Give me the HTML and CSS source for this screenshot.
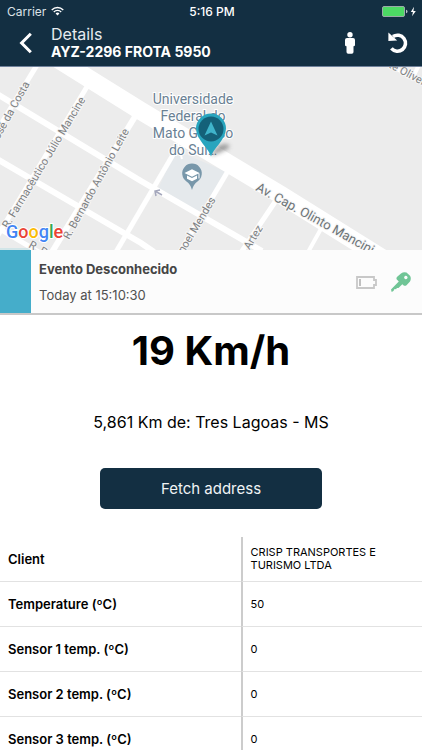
FILE: index.html
```html
<!DOCTYPE html>
<html lang="en">
<head>
<meta charset="utf-8">
<meta name="viewport" content="width=device-width, initial-scale=1">
<title>Details</title>
<link rel="stylesheet" href="styles.css">
</head>
<body>
<div class="app">
  <header class="header">
    <div class="status">
      <div class="status-left">
        <span>Carrier</span>
        <svg class="wifi" viewBox="0 0 14 10" aria-hidden="true">
          <path d="M.8 3.800a8.800 8.800 0 0 1 12.400 0M3 6a5.700 5.700 0 0 1 8 0" fill="none" stroke="#fff" stroke-width="1.500"/>
          <path d="M4.900 7.700a3 3 0 0 1 4.200 0L7 9.900z" fill="#fff"/>
        </svg>
      </div>
      <span class="clock">5:16 PM</span>
      <div class="status-right">
        <svg class="battery" viewBox="0 0 35 11" aria-hidden="true">
          <rect x=".5" y=".5" width="22" height="10" rx="1.500" fill="#4cd964" stroke="#9aa9a8"/>
          <path d="M24 3.700q1.500.3 1.500 1.800T24 7.300z" fill="#b8c2c6"/>
          <path d="M32 .8 28.800 6h2.100l-.8 4.200L33.800 4.900h-2.400z" fill="#fff"/>
        </svg>
      </div>
    </div>
    <nav class="nav">
      <button class="icon-button back" aria-label="Back">
        <svg viewBox="0 0 14 22" width="14" height="22"><path d="M11.800 1.800 2.600 11l9.200 9.200" fill="none" stroke="#fff" stroke-width="3"/></svg>
      </button>
      <div class="titles">
        <span class="title">Details</span>
        <h1 class="vehicle">AYZ-2296 FROTA 5950</h1>
      </div>
      <button class="icon-button" aria-label="Street view">
        <svg viewBox="0 0 12 22" width="12" height="22" fill="#fff"><circle cx="6" cy="2.800" r="2.700"/><path d="M3 6h6q2 0 2 2v5q0 1.200-1.500 1.200V20q0 1.700-1.700 1.700H4.200q-1.700 0-1.700-1.700v-5.800Q1 14.200 1 13V8q0-2 2-2z"/></svg>
      </button>
      <button class="icon-button reload" aria-label="Reload">
        <svg viewBox="0 0 22 22" width="22" height="22"><path d="M6 4.600A8 8 0 1 1 4.400 16.400" fill="none" stroke="#fff" stroke-width="3.600"/><path d="M1.400.6 10.200 8.400 1.400 9z" fill="#fff"/></svg>
      </button>
    </nav>
  </header>

  <main class="content">
    <svg class="map" viewBox="0 0 422 183" preserveAspectRatio="xMidYMid slice" role="img" aria-label="Vehicle location map">
      <defs>
        <filter id="soft" x="-50%" y="-50%" width="200%" height="200%"><feGaussianBlur stdDeviation="2"/></filter>
      </defs>
      <rect width="422" height="183" fill="#ececec"/>
      <path d="M173 88 187 88 227 105 196 149 157 125z" fill="#e5e9ec"/>
      <g fill="none" stroke="#fff" stroke-width="6">
        <path d="M-3 27 141 114 262 184"/>
        <path d="M-3 92 141 176 154 185"/>
        <path d="M37-2 -2 62" stroke-width="5"/>
        <path d="M88 18-3 170" stroke-width="5"/>
        <path d="M136 48 52 185"/>
        <path d="M174 86 116 185" stroke-width="5"/>
        <path d="M228 104 180 185" stroke-width="5"/>
        <path d="M277 132 240 187" stroke-width="5"/>
        <path d="M322 160 307 187" stroke-width="4"/>
        <path d="M386-4 426 18" stroke-width="4"/>
        <path d="M419-2 414 8" stroke-width="4"/>
        <path d="M-2 161 42 187" stroke-width="5"/>
        <path d="M56-9 141 44 281 128 382 191" stroke-width="18"/>
        <path d="M178 77q2 8 4 15" stroke-width="2"/>
      </g>
      <path d="M0 182h30" stroke="#b7dfe5"/>
      <path d="m162 128-7-4m1 5-1-5 5-1" fill="none" stroke="#a4a7bc" stroke-width="1.500"/>
      <g class="street">
        <text transform="translate(8 162) rotate(-59)">R. Farmacêutico Júlio Mancine</text>
        <text transform="translate(69 173) rotate(-61)">R. Bernardo Antônio Leite</text>
        <text transform="translate(30 17) rotate(-61)" text-anchor="end">José da Costa</text>
        <text transform="translate(216 133) rotate(-59)" text-anchor="end">Manoel Mendes</text>
        <text transform="translate(263 161) rotate(-59)" text-anchor="end">R. Artez</text>
        <text transform="translate(28 180) rotate(29)">R. P</text>
        <text transform="translate(388 0) rotate(28)">te Oliveira</text>
        <text class="avenue" transform="translate(255 123) rotate(29)">Av. Cap. Olinto Mancini</text>
      </g>
      <g class="place">
        <text x="193" y="37">Universidade</text>
        <text x="193" y="54">Federal do</text>
        <text x="193" y="71">Mato Grosso</text>
        <text x="193" y="88">do Sul…</text>
      </g>
      <path d="M192 123q-1.500-6-5.500-8.500a9.800 9.800 0 1 1 11 0Q193.500 117 192 123z" fill="#7897aa"/>
      <path d="m184.500 106 7.500-3.800 7.500 3.800-7.500 3.800zM187 108.500l5 2.600 5-2.600v3.200l-5 2.500-5-2.500zM198.500 106.500h1v5h-1z" fill="#fff"/>
      <path d="M211 89q4-11 14-12 8 1 2 5-7 4-16 7z" fill="#555" opacity=".55" filter="url(#soft)"/>
      <path d="M211 89.500c-2-8-15-17-15-28a15 15 0 0 1 30 0c0 11-13 20-15 28z" fill="#28a5be"/>
      <circle cx="211" cy="62" r="12.500" fill="#146179"/>
      <path d="m211 54.500 6.500 14-6.500-3-6.500 3z" fill="#3fb4cb"/>
      <text class="google" x="6" y="171"><tspan fill="#4285f4">G</tspan><tspan fill="#ea4335">o</tspan><tspan fill="#fbbc05">o</tspan><tspan fill="#4285f4">g</tspan><tspan fill="#34a853">l</tspan><tspan fill="#ea4335">e</tspan></text>
    </svg>

    <section class="event">
      <div class="event-text">
        <h2 class="event-name">Evento Desconhecido</h2>
        <time class="event-time">Today at 15:10:30</time>
      </div>
      <svg viewBox="0 0 21 13" width="21" height="13" aria-hidden="true"><path d="M1 1h17v3h2v5h-2v3H1z" fill="none" stroke="#c8c8c8" stroke-width="1.800"/><path d="M3 3h2v7H3z" fill="#c0c0c0"/></svg>
      <svg viewBox="0 0 20 20" width="20" height="20" aria-hidden="true"><path fill="#70c596" fill-rule="evenodd" d="M10 1.500Q12.700-.6 15.500.6L19 3.800Q20.600 6.500 19 9.500l-3.500 3.700q-1.300 1-2.800.3L11.300 12.300 7.500 16l-1.600.1-.8 1.100-1.500-.1-1.200 1.900L.7 20 0 17.500 7.800 9.400 5.600 7.200q-.5-1.500.6-2.400zM14.800 3.800a1.700 1.700 0 1 0 .1 0z"/></svg>
    </section>

    <section class="summary">
      <p class="speed">19 Km/h</p>
      <p class="distance">5,861 Km de: Tres Lagoas - MS</p>
      <button class="fetch">Fetch address</button>
    </section>

    <table class="details">
      <tbody>
        <tr><th scope="row">Client</th><td>CRISP TRANSPORTES E TURISMO LTDA</td></tr>
        <tr><th scope="row">Temperature (ºC)</th><td>50</td></tr>
        <tr><th scope="row">Sensor 1 temp. (ºC)</th><td>0</td></tr>
        <tr><th scope="row">Sensor 2 temp. (ºC)</th><td>0</td></tr>
        <tr><th scope="row">Sensor 3 temp. (ºC)</th><td>0</td></tr>
      </tbody>
    </table>
  </main>
</div>
</body>
</html>
```
FILE: styles.css
```css
* { box-sizing: border-box; }

body {
  margin: 0;
  background: #fff;
  color: #000;
  font-family: Inter, Roboto, sans-serif;
}

h1, h2, p { margin: 0; }

button {
  border: 0;
  font: inherit;
  cursor: pointer;
}

.app {
  display: flex;
  flex-direction: column;
  height: 100vh;
}

.header {
  flex: none;
  background: #132f42;
  color: #fff;
  border-bottom: 1px solid #6f819b;
}

.status {
  display: grid;
  grid-template-columns: 1fr auto 1fr;
  align-items: center;
  height: 22px;
  padding: 0 5px 0 7px;
  font-size: 12px;
}

.status-left {
  display: flex;
  align-items: center;
  gap: 5px;
  color: #dbe2e7;
}

.wifi { width: 13px; height: 10px; }

.clock { font-weight: 500; }

.status-right { display: flex; justify-content: flex-end; }

.battery { width: 35px; height: 11px; }

.nav {
  display: flex;
  align-items: center;
  height: 44px;
  padding: 0 8px 2px 6px;
}

.icon-button {
  display: flex;
  align-items: center;
  justify-content: center;
  width: 40px;
  height: 42px;
  padding: 0;
  background: none;
}

.reload { margin-left: 12px; width: 32px; }

.back { width: 40px; }

.titles {
  flex: 1;
  padding-left: 5px;
}

.title {
  display: block;
  font-size: 16px;
  line-height: 18px;
  color: #e6ebef;
}

.vehicle {
  font-size: 14px;
  line-height: 18px;
  font-weight: 700;
}

.content {
  flex: 1;
  min-height: 0;
  overflow-y: auto;
  scrollbar-width: none;
}

.map {
  display: block;
  width: 100%;
  height: 183px;
  font-family: Roboto, sans-serif;
}

.street text {
  font-size: 11px;
  fill: #7d8082;
  stroke: #f6f6f6;
  stroke-width: 2px;
  paint-order: stroke;
}

.street .avenue {
  font-size: 13px;
  fill: #6d7477;
}

.place text {
  font-size: 14px;
  text-anchor: middle;
  fill: #698093;
  stroke: #fff;
  stroke-width: 2px;
  paint-order: stroke;
}

.google {
  font-size: 18px;
  font-weight: 500;
  stroke: #fff;
  stroke-width: 2px;
  paint-order: stroke;
}

.event {
  display: flex;
  align-items: center;
  gap: 14px;
  padding: 8px 11px 7px 8px;
  border-left: 31px solid #45adca;
  background: #fcfcfc;
  box-shadow: 0 2px 0 #c8c8c8;
}

.event-text { flex: 1; }

.event-name {
  font-size: 13px;
  line-height: 22px;
  font-weight: 700;
  color: #454545;
}

.event-time {
  display: block;
  padding-top: 4px;
  font-size: 13px;
  line-height: 22px;
  color: #505050;
}

.summary {
  display: flex;
  flex-direction: column;
  align-items: center;
  padding: 13px 16px 28px;
}

.speed {
  font-size: 40px;
  line-height: 50px;
  font-weight: 700;
}

.distance {
  padding: 36px 0;
  font-size: 16px;
  line-height: 20px;
}

.fetch {
  width: 57%;
  height: 41px;
  border-radius: 5px;
  background: #132f42;
  color: #f0f3f5;
  font-size: 15px;
}

.details {
  width: 100%;
  border-collapse: separate;
  border-spacing: 0;
  table-layout: fixed;
}

.details th,
.details td {
  height: 45px;
  padding: 0 8px;
  border-bottom: 1px solid #e2e2e2;
  text-align: left;
}

.details th {
  width: 57%;
  font-size: 13px;
  font-weight: 600;
}

.details td {
  border-left: 2px solid #ccc;
  padding-right: 30px;
  font-size: 11px;
  line-height: 13px;
}
```
